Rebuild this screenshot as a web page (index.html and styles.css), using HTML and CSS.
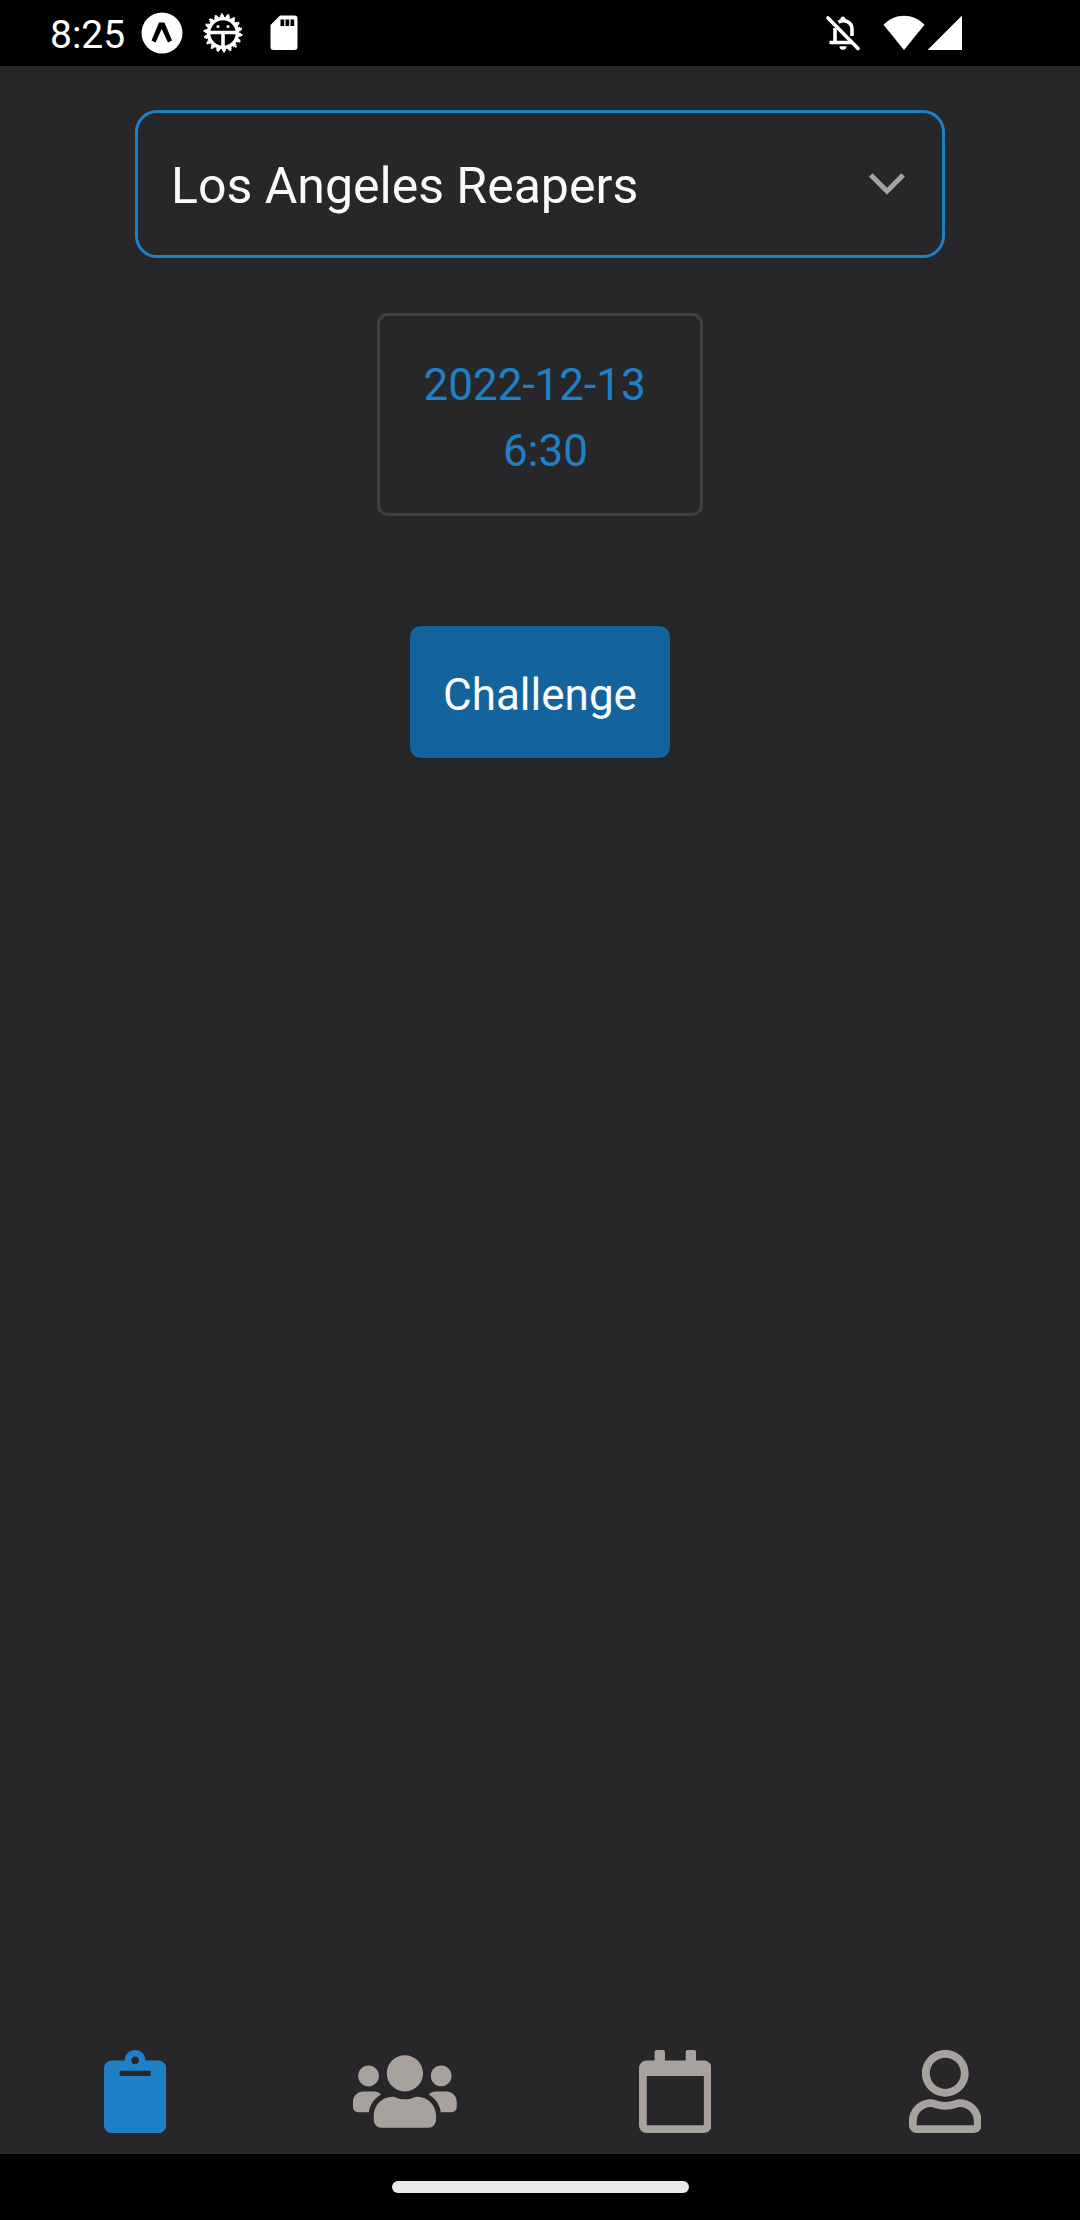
FILE: index.html
```html
<!DOCTYPE html>
<html lang="en">
<head>
<meta charset="utf-8">
<meta name="viewport" content="width=device-width, initial-scale=1">
<title>Challenge a team</title>
<link rel="stylesheet" href="styles.css">
</head>
<body>
<header class="status">
  <time class="clock">8:25</time>
  <div class="notices">
    <svg class="notice" viewBox="0 0 42 42" aria-hidden="true"><circle cx="21" cy="21" r="20.500" fill="#fff"/><path d="M18 10.500H23.500L31 28.500 27 30.500 20.700 17 14.500 30.500 10.500 28.500Z" fill="#000"/></svg>
    <svg class="notice" viewBox="-21 -21 42 42" fill="none" stroke="#fff" aria-hidden="true">
      <circle r="14.500" stroke-width="3.600"/>
      <circle r="16.800" stroke-width="2.400" pathLength="108" stroke-dasharray="4 2"/>
      <circle r="18.600" stroke-width="1.800" pathLength="108" stroke-dasharray="2 4" stroke-dashoffset="-1"/>
      <path d="M-15-.500H15M0 0V15" stroke-width="3.600"/>
      <g fill="#fff" stroke="none"><circle cx="-5" cy="-6.500" r="1.500"/><circle cx="5" cy="-6.500" r="1.500"/></g>
    </svg>
    <svg class="notice" viewBox="0 0 42 42" aria-hidden="true"><path fill="#fff" fill-rule="evenodd" d="M17 3.500h14.500a3 3 0 0 1 3 3v28.500a3 3 0 0 1-3 3h-21a3 3 0 0 1-3-3V13ZM17.500 7.500v6.500h3.700V7.500ZM22.500 7.500v6.500h3.700V7.500ZM27.500 7.500v6.500h3.700V7.500Z"/></svg>
  </div>
  <div class="radios">
    <svg class="bell" viewBox="0 0 36 36" fill="none" stroke="#fff" aria-hidden="true">
      <path d="M3 3 33 33.500" stroke-width="3.600" stroke-linecap="round"/>
      <path d="M4.500 27.500H28M10 27V13M13.500 7.200C19 3.500 27 7 27 14V21" stroke-width="3.600"/>
      <path d="M15.500 5.500V4a2.500 2.500 0 0 1 5 0v1.500ZM14.500 31.300h7a3.500 3.500 0 0 1-7 0Z" fill="#fff" stroke="none"/>
    </svg>
    <svg class="wifi" viewBox="0 0 42 36" aria-hidden="true"><path fill="#fff" d="M.5 9.800C12-2.200 30-2.200 41.500 9.800L21 35Z"/></svg>
    <svg class="signal" viewBox="0 0 35 36" aria-hidden="true"><path fill="#fff" d="M35 .5V35H.5Z"/></svg>
  </div>
</header>

<main class="content">
  <div class="team">
    <select class="team-select" aria-label="Team">
      <option>Los Angeles Reapers</option>
    </select>
    <svg class="chevron" viewBox="0 0 36 22" aria-hidden="true"><path d="M1.800 2 18 18.200 34.200 2" fill="none" stroke="#a3a3a3" stroke-width="5"/></svg>
  </div>
  <button class="when" type="button">2022-12-13 
 6:30</button>
  <button class="challenge" type="button">Challenge</button>
</main>

<nav class="tabs">
  <a class="tab active" href="#challenge" aria-label="Challenge"><svg viewBox="0 0 384 512"><path d="M384 112v352c0 26.510-21.490 48-48 48H48c-26.510 0-48-21.490-48-48V112c0-26.510 21.490-48 48-48h80c0-35.290 28.710-64 64-64s64 28.710 64 64h80c26.510 0 48 21.490 48 48zM192 40c-13.255 0-24 10.745-24 24s10.745 24 24 24 24-10.745 24-24-10.745-24-24-24m96 114v-20a6 6 0 0 0-6-6H102a6 6 0 0 0-6 6v20a6 6 0 0 0 6 6h180a6 6 0 0 0 6-6z"/></svg></a>
  <a class="tab" href="#team" aria-label="Team"><svg viewBox="0 0 640 512"><path d="M96 224c35.300 0 64-28.700 64-64s-28.700-64-64-64-64 28.700-64 64 28.700 64 64 64zm448 0c35.300 0 64-28.700 64-64s-28.700-64-64-64-64 28.700-64 64 28.700 64 64 64zm32 32h-64c-17.600 0-33.500 7.100-45.100 18.600 40.300 22.100 68.900 62 75.100 109.400h66c17.700 0 32-14.300 32-32v-32c0-35.300-28.700-64-64-64zm-256 0c61.900 0 112-50.100 112-112S381.900 32 320 32 208 82.100 208 144s50.100 112 112 112zm76.800 32h-8.300c-20.800 10-43.900 16-68.500 16s-47.600-6-68.500-16h-8.300C179.600 288 128 339.600 128 403.200V432c0 26.500 21.500 48 48 48h288c26.500 0 48-21.500 48-48v-28.800c0-63.600-51.600-115.200-115.200-115.200zm-223.700-13.400C161.500 263.100 145.600 256 128 256H64c-35.300 0-64 28.700-64 64v32c0 17.700 14.300 32 32 32h65.900c6.300-47.400 34.900-87.300 75.200-109.400z"/></svg></a>
  <a class="tab" href="#calendar" aria-label="Calendar"><svg viewBox="0 0 448 512"><path d="M400 64h-48V12c0-6.600-5.400-12-12-12h-40c-6.600 0-12 5.400-12 12v52H160V12c0-6.600-5.400-12-12-12h-40c-6.600 0-12 5.400-12 12v52H48C21.500 64 0 85.500 0 112v352c0 26.500 21.500 48 48 48h352c26.500 0 48-21.500 48-48V112c0-26.500-21.500-48-48-48zm-6 400H54c-3.300 0-6-2.700-6-6V160h352v298c0 3.300-2.700 6-6 6z"/></svg></a>
  <a class="tab" href="#profile" aria-label="Profile"><svg viewBox="0 0 448 512"><path d="M313.600 304c-28.700 0-42.500 16-89.600 16-47.100 0-60.800-16-89.600-16C60.200 304 0 364.200 0 438.400V464c0 26.500 21.500 48 48 48h352c26.500 0 48-21.500 48-48v-25.600c0-74.200-60.200-134.400-134.400-134.400zM400 464H48v-25.600c0-47.600 38.800-86.400 86.400-86.400 14.600 0 38.300 16 89.600 16 51.700 0 74.900-16 89.600-16 47.600 0 86.400 38.800 86.400 86.400V464zM224 288c79.500 0 144-64.500 144-144S303.500 0 224 0 80 64.500 80 144s64.500 144 144 144zm0-240c52.900 0 96 43.100 96 96s-43.100 96-96 96-96-43.100-96-96 43.100-96 96-96z"/></svg></a>
</nav>
<footer class="home-bar"><div class="home-handle"></div></footer>
</body>
</html>
```
FILE: styles.css
```css
* {
  box-sizing: border-box;
}

body {
  margin: 0;
  min-height: 100vh;
  display: flex;
  flex-direction: column;
  background: #27272a;
  color: #fafafa;
  font-family: Roboto, sans-serif;
}

button,
select {
  font: inherit;
  cursor: pointer;
}

svg {
  display: block;
}

/* System status bar */
.status {
  display: flex;
  align-items: center;
  height: 66px;
  padding: 0 118px 0 50px;
  background: #000;
  color: #fff;
}

.clock {
  font-size: 39px;
  line-height: 66px;
  padding-top: 3px;
}

.notices {
  display: flex;
  gap: 19px;
  margin-left: 16px;
}

.notice {
  width: 42px;
  height: 42px;
}

.radios {
  display: flex;
  gap: 2px;
  margin-left: auto;
}

.bell {
  width: 36px;
  height: 36px;
  margin-right: 20px;
}

.wifi {
  width: 42px;
  height: 36px;
}

.signal {
  width: 35px;
  height: 36px;
}

/* Challenge form */
.content {
  flex: 1;
  display: flex;
  flex-direction: column;
  align-items: center;
  padding-top: 44px;
}

.team {
  width: 75%;
  display: grid;
  align-items: center;
}

.team-select {
  grid-area: 1 / 1;
  appearance: none;
  width: 100%;
  height: 148px;
  padding: 4px 80px 0 33px;
  border: 3px solid #1f80c7;
  border-radius: 22px;
  background: transparent;
  color: #fafafa;
  font-size: 50px;
}

.chevron {
  grid-area: 1 / 1;
  justify-self: end;
  width: 36px;
  height: 22px;
  margin-right: 40px;
  pointer-events: none;
}

.when {
  margin-top: 55px;
  padding: 36px 43px 29px;
  border: 3px solid #404040;
  border-radius: 11px;
  background: transparent;
  color: #1f80c7;
  font-size: 44px;
  line-height: 66px;
  text-align: center;
  white-space: pre;
}

.challenge {
  margin-top: 110px;
  padding: 36px 33px 30px;
  border: 0;
  border-radius: 11px;
  background: #13649c;
  color: #fafafa;
  font-size: 44px;
  line-height: 66px;
}

/* Bottom navigation */
.tabs {
  display: grid;
  grid-template-columns: repeat(4, 1fr);
  padding-bottom: 21px;
}

.tab {
  display: flex;
  justify-content: center;
  color: #a8a29e;
}

.tab.active {
  color: #1f80c7;
}

.tab svg {
  height: 83px;
  fill: currentColor;
}

.home-bar {
  display: flex;
  align-items: center;
  justify-content: center;
  height: 66px;
  background: #000;
}

.home-handle {
  width: 297px;
  height: 12px;
  border-radius: 6px;
  background: #e9e9e9;
}
```
